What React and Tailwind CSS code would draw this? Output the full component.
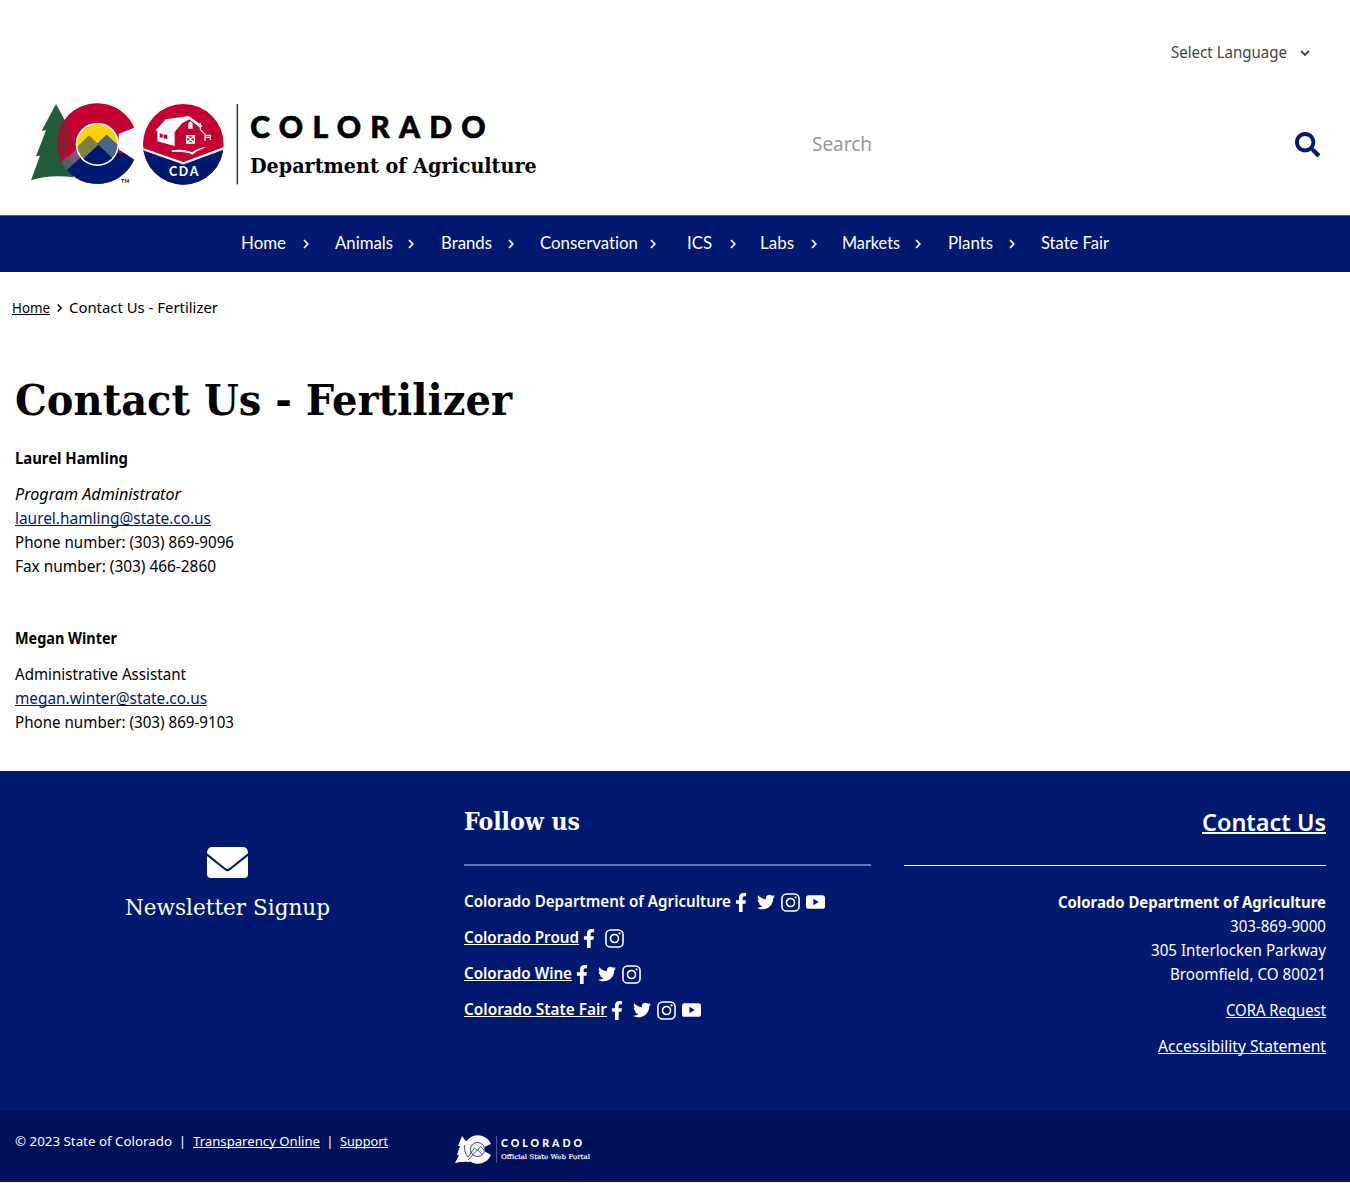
import { useLayoutEffect, useRef } from "react";
import { FaSearch, FaFacebookF, FaTwitter } from "react-icons/fa";

// A single line of text condensed or widened to a given measure.
function Line({ w, className = "", children }) {
  const ref = useRef(null);
  useLayoutEffect(() => {
    const el = ref.current;
    const fit = () => {
      el.style.transform = "none";
      el.style.transform = `scaleX(${w / el.getBoundingClientRect().width})`;
    };
    fit();
    document.fonts?.ready.then(fit);
  }, [w]);
  return (
    <span className="inline-block text-left align-top whitespace-nowrap" style={{ width: w }}>
      <span ref={ref} className={`inline-block origin-left ${className}`}>{children}</span>
    </span>
  );
}

const SLAB = "font-['DejaVu_Serif',serif]";
const LINK = "underline underline-offset-1 [text-decoration-skip-ink:none]";

function Chevron({ className = "" }) {
  return (
    <svg viewBox="0 0 8 10" className={`h-[10px] w-2 shrink-0 ${className}`} fill="none" stroke="currentColor" strokeWidth="1.7">
      <path d="M2 1l3.8 4L2 9" />
    </svg>
  );
}

function Logo() {
  return (
    <svg viewBox="0 0 1620 330" className="h-[110px] w-[540px]" role="img" aria-label="Colorado Department of Agriculture">
      <defs>
        <clipPath id="c-shape">
          <path d="M343 113A121 121 0 1 0 343 208L298 178L298 133Z" />
        </clipPath>
        <clipPath id="sun"><circle cx="232" cy="163" r="60" /></clipPath>
        <clipPath id="badge"><circle cx="490" cy="163" r="121" /></clipPath>
      </defs>
      <path d="M108 42L153 125L143 124L160 262Q90 253 33 271L60 197L48 199L78 121L65 122Z" fill="#235c39" />
      <g clipPath="url(#c-shape)">
        <rect x="100" y="30" width="260" height="270" fill="#c3002f" />
        <path d="M105 90L134 90L153 125L143 124L150 172L125 214H105Z" fill="#8f1a30" />
        <path d="M125 220L210 137L250 180L250 290H120Z" fill="#7d5577" />
        <path d="M122 218L142 198L165 222L150 262L130 262Z" fill="#4f5f64" />
        <path d="M140 240L232 158L300 190H360V300H140Z" fill="#001970" />
      </g>
      <path d="M296 132L350 110V214L296 178Z" fill="#fff" />
      <circle cx="232" cy="163" r="65" fill="#fff" />
      <g clipPath="url(#sun)">
        <rect x="165" y="95" width="135" height="135" fill="#ffd100" />
        <path d="M160 182L207 136L232 160L260 134L300 170V235H160Z" fill="#81813f" />
        <path d="M232 161L260 134L300 172V220Z" fill="#47668b" />
        <path d="M160 235L235 164L298 222V240H160Z" fill="#001970" />
      </g>
      <text x="303" y="279" fontSize="15" fontWeight="700" fontFamily="Lato, sans-serif" textLength="25">TM</text>

      <g clipPath="url(#badge)">
        <rect x="365" y="40" width="250" height="250" fill="#c3002f" />
        <path d="M365 178L490 222L615 176V290H365Z" fill="#001970" />
        <path d="M365 176L490 220L615 174" fill="none" stroke="#fff" strokeWidth="7" />
      </g>
      <path d="M437 88L507 78L547 107L541 114L508 88L486 100L464 126L406 122Z" fill="#fff" />
      <path d="M412 120L464 126V168L412 154Z" fill="#fff" />
      <path d="M419 130l9 2v12l-9-2zM431 133l11 2v13l-11-3z" fill="#c3002f" />
      <path d="M505 99l7-6 6 8v15h-13z" fill="#fff" />
      <path d="M500 137h23v22h-23zM500 137l23 22M523 137l-23 22" fill="none" stroke="#fff" strokeWidth="4" />
      <path d="M541 98V119L555 132V153M555 136H571V151M555 142H571" fill="none" stroke="#fff" strokeWidth="3.5" />
      <path d="M455 181Q496 176 516 187Q538 172 560 172Q532 181 518 194Q495 183 455 186Z" fill="#fff" />
      <text x="447" y="257" fontSize="37" fontWeight="900" fontFamily="Lato, sans-serif" fill="#fff" textLength="88">CDA</text>

      <rect x="650" y="42" width="4" height="241" fill="#222" />
      <text x="691" y="144" fontSize="90" fontWeight="900" fontFamily="Lato, sans-serif" stroke="#000" strokeWidth="2" textLength="706">COLORADO</text>
      <text x="690" y="248" fontSize="62" fontWeight="700" fontFamily="DejaVu Serif, serif" textLength="860" lengthAdjust="spacingAndGlyphs">Department of Agriculture</text>
    </svg>
  );
}

function PortalLogo() {
  return (
    <svg viewBox="0 0 140 30" className="h-[30px] w-[140px]" role="img" aria-label="Colorado Official State Web Portal">
      <path d="M7 1L13 9L15 27Q8 26 0 28L4 20H2L5 11H3Z" fill="#fff" />
      <path d="M36 9A14.2 14.2 0 1 0 36 20L30 16.5V11.5Z" fill="#fff" />
      <circle cx="22.5" cy="14.5" r="7" fill="#fff" stroke="#00105a" strokeWidth=".8" />
      <path d="M9.5 10Q9 18 13 22L19.5 13L22.5 15.5L25.5 11.5L29 15M13 25L22.5 15L27 19" fill="none" stroke="#00105a" strokeWidth=".7" />
      <path d="M41.5 1V28" stroke="#5d6ba5" strokeWidth=".8" />
      <text x="46" y="12.4" fontSize="10.6" fontWeight="900" fill="#fff" fontFamily="Lato, sans-serif" textLength="81">COLORADO</text>
      <text x="46" y="23.7" fontSize="6.6" fill="#fff" stroke="#fff" strokeWidth=".15" fontFamily="DejaVu Serif, serif" textLength="89" lengthAdjust="spacingAndGlyphs">Official State Web Portal</text>
    </svg>
  );
}

function Instagram() {
  return (
    <svg viewBox="0 0 18 18" className="size-[19px]" fill="none" stroke="currentColor">
      <rect x=".9" y=".9" width="16.2" height="16.2" rx="4.4" strokeWidth="1.5" />
      <circle cx="9" cy="9" r="3.8" strokeWidth="1.5" />
      <circle cx="13.8" cy="4.2" r="1.1" fill="currentColor" stroke="none" />
    </svg>
  );
}

function YouTube() {
  return (
    <svg viewBox="0 0 18 13" className="h-[14px] w-[19px]">
      <rect width="18" height="13" rx="2.5" fill="currentColor" />
      <path d="M7 3.5v6l5-3z" fill="#001970" />
    </svg>
  );
}

const ICONS = {
  facebook: <FaFacebookF className="h-[19px] w-[12px]" />,
  twitter: <FaTwitter className="size-[18px]" />,
  instagram: <Instagram />,
  youtube: <YouTube />,
};

const NAV = [
  ["Home", 45, "pr-[25px]"],
  ["Animals", 58, "pr-[26px]"],
  ["Brands", 51, "pr-[25px]"],
  ["Conservation", 98, "pr-[30px]"],
  ["ICS", 25, "pr-[23px]"],
  ["Labs", 34, "pr-[24px]"],
  ["Markets", 58, "pr-[26px]"],
  ["Plants", 45, "pr-[25px]"],
  ["State Fair", 68, ""],
];

const SOCIAL = [
  ["Colorado Department of Agriculture", 267, false, ["facebook", "twitter", "instagram", "youtube"]],
  ["Colorado Proud", 115, true, ["facebook", "instagram"]],
  ["Colorado Wine", 108, true, ["facebook", "twitter", "instagram"]],
  ["Colorado State Fair", 143, true, ["facebook", "twitter", "instagram", "youtube"]],
];

export default function App() {
  return (
    <div className="h-[1183px] overflow-hidden bg-white font-['Noto_Sans','Open_Sans',sans-serif] text-[16px] leading-6 text-black">
      <header className="flex h-[215px] flex-col">
        <div className="flex h-[90px] items-start justify-end pt-10 pr-10 text-[#444]">
          <button className="flex items-center">
            <Line w={116}>Select Language</Line>
            <svg viewBox="0 0 10 7" className="mt-[2px] ml-[13px] h-[7px] w-[10px]" fill="none" stroke="currentColor" strokeWidth="1.8"><path d="M1 1l4 4 4-4" /></svg>
          </button>
        </div>
        <div className="flex h-[110px] justify-between pr-[30px] pl-5">
          <Logo />
          <div className="flex h-[108px] w-[508px] items-center justify-between">
            <span className="text-[20px] text-[#999]"><Line w={60}>Search</Line></span>
            <FaSearch className="size-[25px] text-[#001970]" />
          </div>
        </div>
      </header>

      <nav className="flex h-[57px] items-center border-t border-[#4a5c95] bg-[#001970] pb-[2px] pl-[241px] font-['Lato',sans-serif] text-[16.5px] text-white [font-variant-ligatures:none]">
        <ul className="grid grid-cols-[94px_106px_99px_147px_73px_82px_106px_93px_68px]">
          {NAV.map(([label, w, pad]) => (
            <li key={label} className={`flex items-center justify-between ${pad}`}>
              <Line w={w}>{label}</Line>
              {pad && <Chevron className="mt-[2px]" />}
            </li>
          ))}
        </ul>
      </nav>

      <main className="h-[499px]">
        <div className="flex h-[72px] items-center pl-3 text-[14.4px]">
          <a className="flex" href="#home"><Line w={38} className={LINK}>Home</Line></a>
          <Chevron className="mr-[6px] ml-[6px] h-2 w-[7px]" />
          <Line w={149}>Contact Us - Fertilizer</Line>
        </div>
        <div className="pl-[15px]">
          <h1 className={`mt-[34px] h-11 text-[43px] leading-[44px] font-bold ${SLAB}`}><Line w={497}>Contact Us - Fertilizer</Line></h1>
          <div className="mt-[24px] flex flex-col items-start">
            <Line w={113} className="font-bold">Laurel Hamling</Line>
            <div className="h-3" />
            <Line w={166} className="italic">Program Administrator</Line>
            <a href="#laurel" className="flex text-[#001970]"><Line w={196} className={LINK}>laurel.hamling@state.co.us</Line></a>
            <Line w={219}>Phone number: (303) 869-9096</Line>
            <Line w={201}>Fax number: (303) 466-2860</Line>
            <div className="h-12" />
            <Line w={102} className="font-bold">Megan Winter</Line>
            <div className="h-3" />
            <Line w={171}>Administrative Assistant</Line>
            <a href="#megan" className="flex text-[#001970]"><Line w={192} className={LINK}>megan.winter@state.co.us</Line></a>
            <Line w={219}>Phone number: (303) 869-9103</Line>
          </div>
        </div>
      </main>

      <footer className="text-white">
        <div className="flex h-[340px] bg-[#001970]">
          <section className="flex w-[455px] flex-col items-center pt-[76px]">
            <svg viewBox="0 0 41 31" className="h-[31px] w-[41px]" fill="currentColor">
              <path d="M5 0H36Q40 0 41 5V6.2L22.3 21.2Q20.5 22.6 18.7 21.2L0 6.2V5Q1 0 5 0Z" />
              <path d="M0 9L18 23.3Q20.5 25 23 23.3L41 9V27Q41 31 37 31H4Q0 31 0 27Z" />
            </svg>
            <div className={`mt-[18px] text-[22px] ${SLAB}`}><Line w={205}>Newsletter Signup</Line></div>
          </section>

          <section className="ml-[9px] w-[407px] pt-[39px]">
            <h2 className={`h-6 text-[23.5px] font-bold ${SLAB}`}><Line w={116}>Follow us</Line></h2>
            <div className="mt-[30px] h-[2px] bg-[#6077b6]" />
            <ul className="mt-[23px] flex flex-col gap-3 font-semibold">
              {SOCIAL.map(([name, w, linked, icons]) => (
                <li key={name} className="flex h-6">
                  <Line w={w} className={linked ? LINK : ""}>{name}</Line>
                  <span className="-ml-[2px] flex pt-[1px]">
                    {icons.map((icon) => (
                      <span key={icon} className="flex h-6 w-[24.8px] items-center justify-center">{ICONS[icon]}</span>
                    ))}
                  </span>
                </li>
              ))}
            </ul>
          </section>

          <section className="ml-[33px] flex w-[422px] flex-col items-end pt-[39px]">
            <h2 className="h-6 text-[24px] font-semibold"><Line w={124} className="underline decoration-2 underline-offset-1">Contact Us</Line></h2>
            <div className="mt-[31px] h-px w-full bg-white" />
            <div className="h-6" />
            <Line w={268} className="font-bold">Colorado Department of Agriculture</Line>
            <Line w={96}>303-869-9000</Line>
            <Line w={175}>305 Interlocken Parkway</Line>
            <Line w={156}>Broomfield, CO 80021</Line>
            <a href="#cora" className="mt-3 flex"><Line w={100} className={LINK}>CORA Request</Line></a>
            <a href="#accessibility" className="mt-3 flex"><Line w={168} className={LINK}>Accessibility Statement</Line></a>
          </section>
        </div>

        <div className="flex h-[71px] bg-[#00105a] pl-[15px] text-[13.3px]">
          <div className="flex w-[440px] pt-[18px]">
            <Line w={157}>© 2023 State of Colorado</Line>
            <span className="w-[21px] text-center">|</span>
            <Line w={127} className={LINK}>Transparency Online</Line>
            <span className="w-5 text-center">|</span>
            <Line w={48} className={LINK}>Support</Line>
          </div>
          <div className="pt-6"><PortalLogo /></div>
        </div>
      </footer>
    </div>
  );
}
